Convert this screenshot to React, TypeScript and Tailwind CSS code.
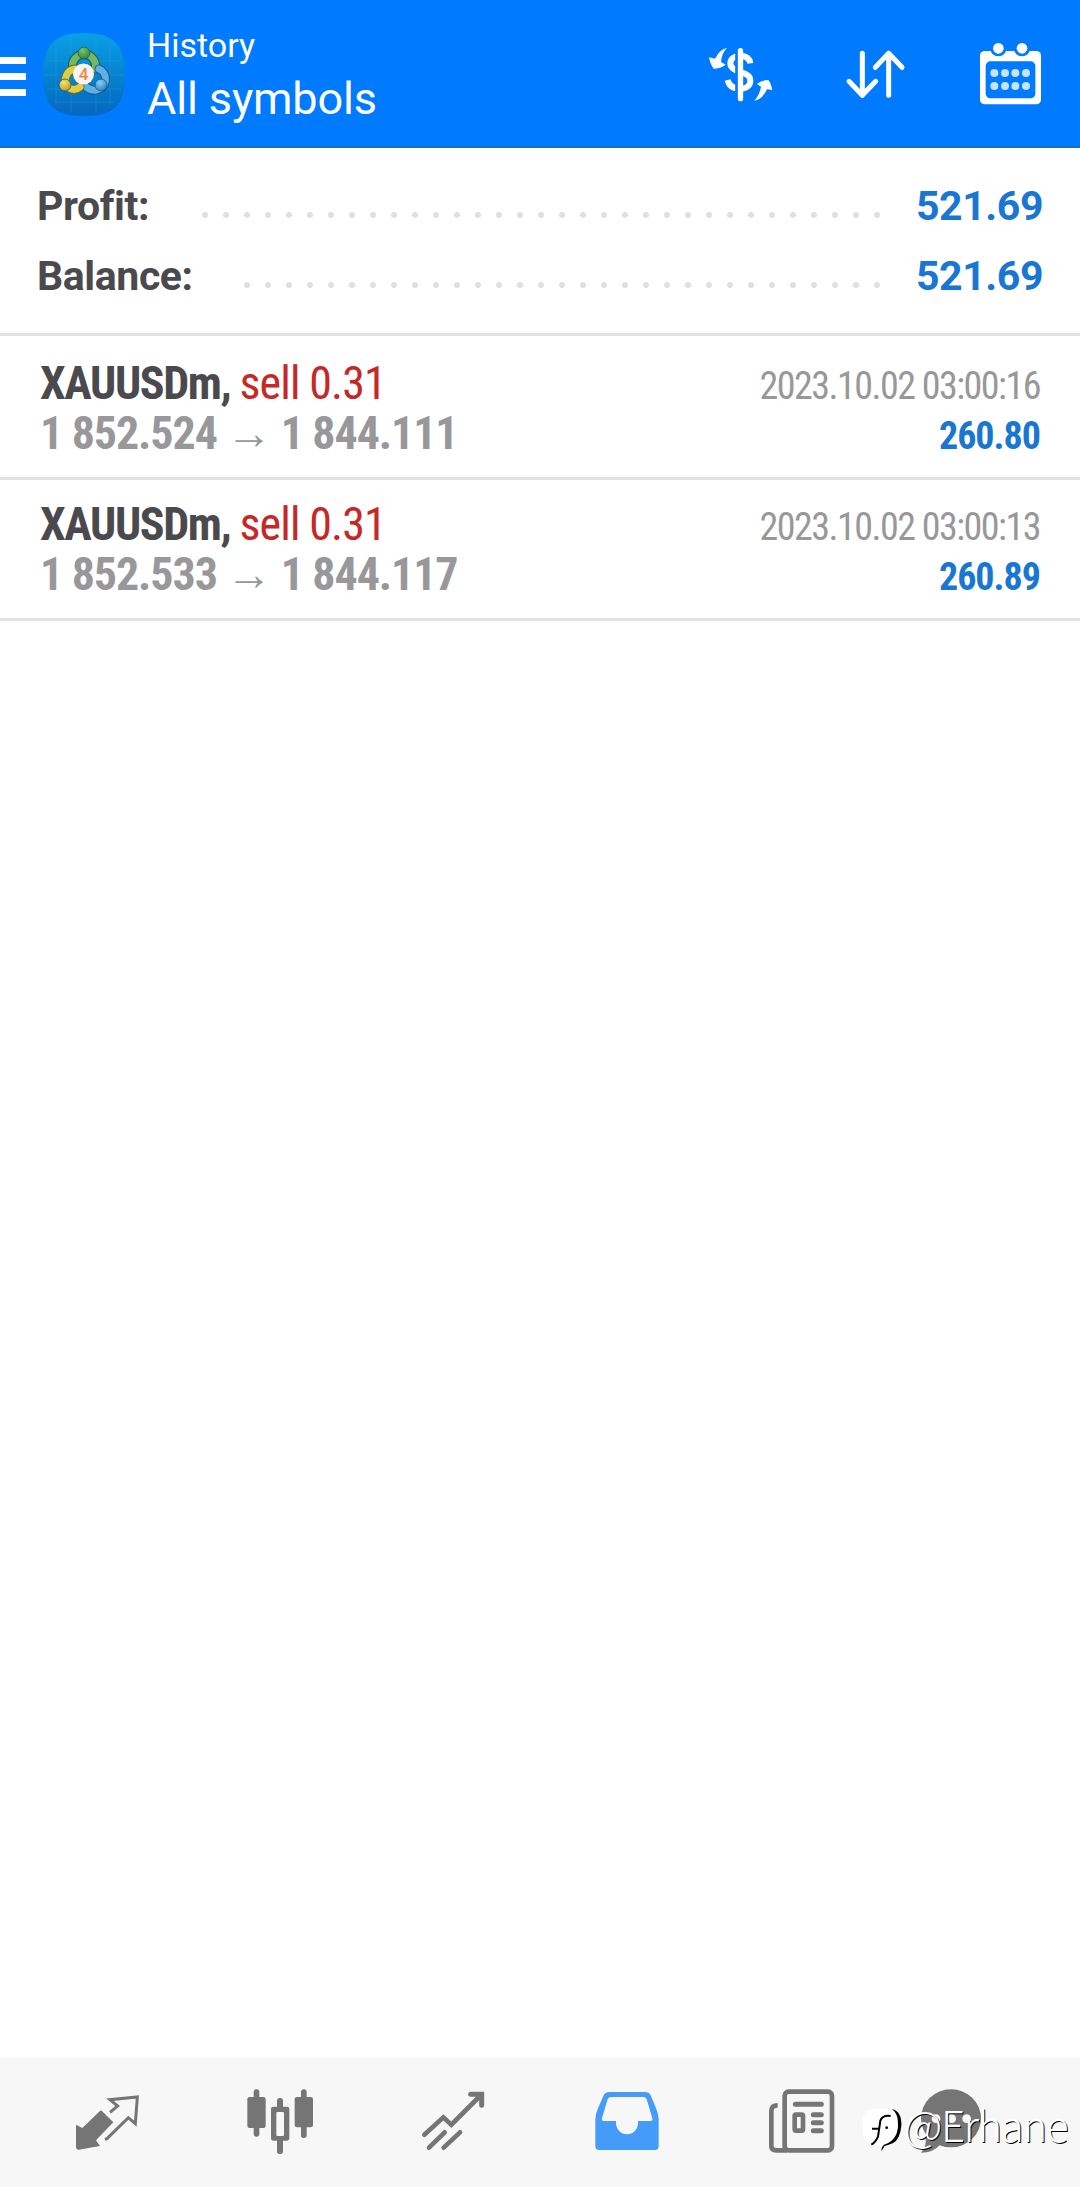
const summary = [
  { label: 'Profit:', value: '521.69', dots: 33 },
  { label: 'Balance:', value: '521.69', dots: 31 },
];

const deals = [
  {
    symbol: 'XAUUSDm',
    side: 'sell 0.31',
    open: '1 852.524',
    close: '1 844.111',
    time: '2023.10.02 03:00:16',
    profit: '260.80',
  },
  {
    symbol: 'XAUUSDm',
    side: 'sell 0.31',
    open: '1 852.533',
    close: '1 844.117',
    time: '2023.10.02 03:00:13',
    profit: '260.89',
  },
];

function AppLogo() {
  return (
    <svg width="84" height="84" viewBox="0 0 84 84">
      <defs>
        <linearGradient id="tile" x1="0" y1="0" x2="0" y2="1">
          <stop offset="0" stopColor="#0aa0e6" />
          <stop offset="0.5" stopColor="#0583cf" />
          <stop offset="1" stopColor="#0567be" />
        </linearGradient>
        <radialGradient id="green" cx="0.4" cy="0.3" r="0.8">
          <stop offset="0" stopColor="#7cc46a" />
          <stop offset="1" stopColor="#2b7f35" />
        </radialGradient>
        <radialGradient id="gold" cx="0.4" cy="0.3" r="0.8">
          <stop offset="0" stopColor="#f3e36a" />
          <stop offset="1" stopColor="#b09a20" />
        </radialGradient>
        <radialGradient id="sky" cx="0.4" cy="0.3" r="0.8">
          <stop offset="0" stopColor="#8fd0f4" />
          <stop offset="1" stopColor="#1d78c4" />
        </radialGradient>
      </defs>
      <path
        d="M42 0C72 0 83 12 83 42S72 83 42 83 1 72 1 42 12 0 42 0Z"
        fill="url(#tile)"
      />
      <path
        d="M14 12V72M29 5V79M54 5V79M68 12V72M5 28H79M2 42H16M66 42H82M5 56H79M12 69H72"
        stroke="#35a5e6"
        strokeWidth="0.8"
        opacity="0.4"
      />
      {/* three linked rings */}
      <g fill="none" strokeLinecap="round">
        <path d="M31 36A11.5 11.5 0 1 1 53 36" stroke="#245c4c" strokeWidth="9" />
        <path d="M31 36A11.5 11.5 0 1 1 53 36" stroke="#74b962" strokeWidth="7" />
        <path d="M42 52Q48 58 54 57A11 11 0 0 0 57 36" stroke="#1c5390" strokeWidth="9" />
        <path d="M42 52Q48 58 54 57A11 11 0 0 0 57 36" stroke="#5fb0e6" strokeWidth="7" />
        <path d="M33 36A11 11 0 0 0 26 54Q32 59 38 54" stroke="#6b6a2c" strokeWidth="9" />
        <path d="M33 36A11 11 0 0 0 26 54Q32 59 38 54" stroke="#dccd4c" strokeWidth="7" />
      </g>
      <g stroke="#23566b" strokeWidth="0.8">
        <circle cx="42" cy="20" r="6" fill="url(#green)" />
        <circle cx="23" cy="52" r="6" fill="url(#gold)" />
        <circle cx="59" cy="52" r="6" fill="url(#sky)" />
      </g>
      <circle cx="41.5" cy="41" r="10.5" fill="#f8f4ee" />
      <text
        x="41.5"
        y="47"
        textAnchor="middle"
        fontSize="17"
        fontWeight="500"
        fontFamily="Roboto, sans-serif"
        fill="#e98a4c"
      >
        4
      </text>
    </svg>
  );
}

function CurrencyIcon() {
  return (
    <svg width="64" height="64" viewBox="0 0 192 192" fill="none" stroke="#fff">
      <path
        d="M124 64C122 48 110 42 94 42C76 42 64 50 64 64C64 78 76 84 94 90C114 96 124 102 124 116C124 130 112 140 94 140C72 140 60 132 56 114"
        strokeWidth="18"
      />
      <path d="M83 20V176" stroke="#007aff" strokeWidth="9" />
      <path d="M94.500 26V170" strokeWidth="16" strokeLinecap="round" />
      <path d="M54 18Q34 20 18 50L0 46Q4 68 14 80Q34 80 50 68L36 60Q38 34 54 18Z" fill="#fff" stroke="none" />
      <path d="M136 176Q160 172 174 142L190 144Q186 124 178 114Q160 114 144 126L156 134Q152 158 136 176Z" fill="#fff" stroke="none" />
    </svg>
  );
}

function SortIcon() {
  return (
    <svg
      width="64"
      height="64"
      viewBox="0 0 192 192"
      fill="none"
      stroke="#fff"
      strokeWidth="15"
      strokeLinecap="round"
      strokeLinejoin="round"
    >
      <path d="M55 34V160M15 118L55 160L95 118" />
      <path d="M134 160V34M94 76L134 34L174 76" />
    </svg>
  );
}

function CalendarIcon() {
  return (
    <svg width="64" height="64" viewBox="0 0 192 192">
      <rect x="3" y="27" width="183" height="160" rx="14" fill="#fff" />
      <rect x="20" y="58" width="149" height="111" rx="14" fill="#007aff" />
      <circle cx="58" cy="18" r="25" fill="#007aff" />
      <circle cx="129" cy="18" r="25" fill="#007aff" />
      <circle cx="58" cy="19" r="16" fill="#fff" />
      <circle cx="129" cy="19" r="16" fill="#fff" />
      {[93, 132].map((cy) =>
        [46, 78, 109, 141].map((cx) => (
          <circle key={`${cx}-${cy}`} cx={cx} cy={cy} r="12" fill="#c4e4ff" />
        ))
      )}
    </svg>
  );
}

function TradeIcon() {
  return (
    <svg width="72" height="72" viewBox="0 0 216 216">
      <path
        d="M92 74L127 109L75 163L87 180L23 191Q15 192 15 184V116L34 126L86 76Q89 72 92 74Z"
        fill="#757575"
      />
      <path
        d="M117 79L140 60L117 41L199 33L193 113L172 95L108 158L102 160"
        fill="none"
        stroke="#757575"
        strokeWidth="9"
      />
    </svg>
  );
}

function QuotesIcon() {
  return (
    <svg width="72" height="72" viewBox="0 0 216 216" fill="#757575">
      <rect x="7" y="33" width="55" height="93" rx="7" />
      <rect x="26" y="10" width="17" height="142" rx="8" />
      <rect x="96" y="36" width="18" height="168" rx="8" />
      <rect x="78" y="62" width="55" height="102" rx="7" />
      <rect x="94" y="78" width="23" height="72" rx="3" fill="#f7f7f7" />
      <rect x="149" y="33" width="55" height="91" rx="7" />
      <rect x="168" y="10" width="17" height="146" rx="8" />
    </svg>
  );
}

function ChartIcon() {
  return (
    <svg
      width="72"
      height="72"
      viewBox="0 0 216 216"
      fill="none"
      stroke="#757575"
      strokeWidth="14"
      strokeLinecap="round"
    >
      <path d="M16 146L73 94L97 116L186 27" />
      <path d="M155 25H188V58" strokeWidth="15" />
      <path d="M30 185L77 139M74 185L123 139" />
    </svg>
  );
}

function InboxIcon() {
  return (
    <svg width="72" height="72" viewBox="0 0 216 216">
      <path
        fillRule="evenodd"
        fill="#449bf8"
        d="M50 18H156Q168 18 173 28L189 67Q197 85 197 100V180Q197 192 185 192H19Q7 192 7 180V100Q7 85 15 67L32 28Q37 18 50 18ZM54 33Q47 33 44 40L27 97Q25 105 32 105H69V112A33 33 0 0 0 135 112V105H172Q180 105 178 97L161 40Q158 33 151 33Z"
      />
    </svg>
  );
}

function NewsIcon() {
  return (
    <svg
      width="72"
      height="72"
      viewBox="0 0 216 216"
      fill="none"
      stroke="#757575"
      strokeWidth="14"
    >
      <rect x="53" y="17" width="142" height="176" rx="12" />
      <path d="M32 58Q13 58 13 74V180Q13 193 28 193H60" />
      <path d="M85 55H163M139 86H163M139 110H163M139 134H163" strokeWidth="15" strokeLinecap="round" />
      <rect x="83" y="86" width="25" height="48" rx="4" />
    </svg>
  );
}

function ChatIcon() {
  return (
    <svg width="72" height="72" viewBox="0 0 216 216" fill="#757575">
      <ellipse cx="105" cy="97" rx="90" ry="87" />
      <path d="M28 150Q34 180 15 200Q52 200 72 176Z" />
      <g fill="#f7f7f7">
        <circle cx="60" cy="98" r="13" />
        <circle cx="107" cy="98" r="13" />
        <circle cx="152" cy="98" r="13" />
      </g>
    </svg>
  );
}

function Watermark() {
  return (
    <div className="absolute top-[2104px] left-[860px] flex items-start">
      <svg width="46" height="50" viewBox="0 0 138 150">
        <path
          d="M40 14H88Q116 16 118 48V76Q116 106 92 116L72 124L66 134L56 124H40Q10 120 8 84V48Q10 18 40 14Z"
          fill="#fff"
        />
        <path
          d="M96 15Q126 22 124 66Q120 108 98 118Q82 124 74 126L64 142Q64 128 72 122Q112 110 114 66Q116 30 96 15Z"
          fill="#000"
        />
        <path
          d="M92 36Q68 32 61 50Q58 72 54 98Q46 116 34 122M36 74H58"
          fill="none"
          stroke="#000"
          strokeWidth="6"
        />
        <circle cx="80" cy="71" r="4" />
      </svg>
      <span className="-mt-px -ml-[2px] font-['Noto_Sans_CJK_SC','Noto_Sans',sans-serif] text-[42px] leading-none font-light tracking-[-1.3px] text-white [text-shadow:1px_1px_0_#000]">
        @Erhane
      </span>
    </div>
  );
}

export default function App() {
  return (
    <div className="relative flex h-[2187px] w-[1080px] flex-col overflow-hidden bg-white font-[Roboto,sans-serif]">
      <header className="flex h-[148px] shrink-0 items-center border-b-2 border-[#1a6fc4] bg-[#007aff] text-white">
        <div className="flex w-[26px] flex-col gap-[9px] pt-[6px]">
          <span className="h-[7px] bg-white" />
          <span className="h-[7px] bg-white" />
          <span className="h-[7px] bg-white" />
        </div>
        <div className="ml-4 pt-1">
          <AppLogo />
        </div>
        <div className="ml-[21px] flex flex-col pt-[6px]">
          <span className="text-[34px] leading-[46px]">History</span>
          <span className="text-[45px] leading-[62px] tracking-[-0.15px]">All symbols</span>
        </div>
        <div className="mr-[37px] ml-auto flex gap-[71px] pt-[2px]">
          <CurrencyIcon />
          <SortIcon />
          <CalendarIcon />
        </div>
      </header>

      <section className="flex h-[188px] shrink-0 flex-col border-b-3 border-[#e3e3e3] pt-[23px] pr-[37px] pl-[37px]">
        {summary.map((row) => (
          <div
            key={row.label}
            className="flex h-[70px] items-center text-[41px] leading-none font-bold tracking-[-0.4px]"
          >
            <span className="text-[#4a4a4e]">{row.label}</span>
            <div className="mt-[18px] mr-[36px] ml-auto flex gap-[15px]">
              {Array.from({ length: row.dots }, (_, idx) => (
                <span key={idx} className="size-[6px] rounded-full bg-[#e0e0e0]" />
              ))}
            </div>
            <span className="w-[127px] text-right text-[#1976d2]">{row.value}</span>
          </div>
        ))}
      </section>

      <main className="flex flex-col pt-[3px]">
        {deals.map((deal) => (
          <section
            key={deal.time}
            className="flex h-[141px] justify-between border-b-3 border-[#e3e3e3] px-10 pt-[19px] font-['Roboto_Condensed',Roboto,sans-serif] [font-stretch:75%]"
          >
            <div className="flex flex-col text-[46px] leading-[50px] font-bold">
              <p className="tracking-[-1.4px] text-[#4a4a4e]">
                {deal.symbol},{' '}
                <span className="font-normal tracking-[-0.9px] text-[#c62828]">
                  {deal.side}
                </span>
              </p>
              <p className="tracking-[-1.1px] text-[#98989b]">
                {deal.open} → {deal.close}
              </p>
            </div>
            <div className="flex flex-col items-end pt-[3px] text-[38px] leading-[50px]">
              <span className="tracking-[-1.5px] text-[#98989b]">{deal.time}</span>
              <span className="font-bold tracking-[-1px] text-[#1976d2]">
                {deal.profit}
              </span>
            </div>
          </section>
        ))}
      </main>

      <nav className="mt-auto flex h-[129px] shrink-0 items-start gap-[102px] bg-[#f7f7f7] pt-7 pl-[71px]">
        <TradeIcon />
        <QuotesIcon />
        <ChartIcon />
        <InboxIcon />
        <NewsIcon />
        <div className="-ml-[25px]">
          <ChatIcon />
        </div>
      </nav>
      <Watermark />
    </div>
  );
}
